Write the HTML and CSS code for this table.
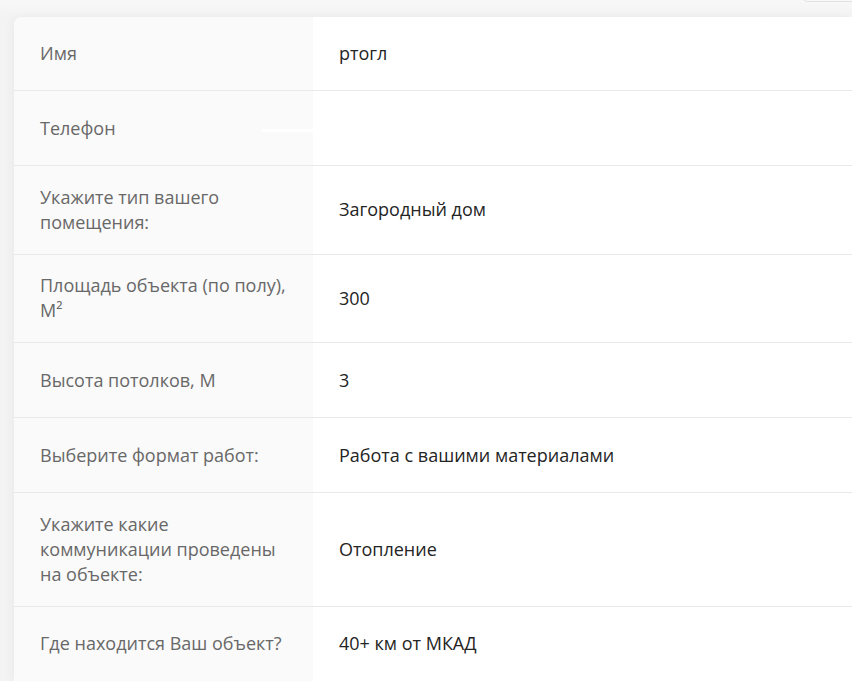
FILE: index.html
```html
<!DOCTYPE html>
<html lang="ru">
<head>
<meta charset="utf-8">
<title>Заявка</title>
<link rel="stylesheet" href="styles.css">
</head>
<body>
<div class="topbar"><div class="tab"></div></div>
<div class="card">
  <div class="row first"><div class="label">Имя</div><div class="value">ртогл</div></div>
  <div class="row"><div class="label">Телефон<span class="redact"></span></div><div class="value"></div></div>
  <div class="row"><div class="label">Укажите тип вашего помещения:</div><div class="value">Загородный дом</div></div>
  <div class="row"><div class="label">Площадь объекта (по полу), М²</div><div class="value">300</div></div>
  <div class="row"><div class="label">Высота потолков, М</div><div class="value">3</div></div>
  <div class="row"><div class="label">Выберите формат работ:</div><div class="value">Работа с вашими материалами</div></div>
  <div class="row"><div class="label">Укажите какие коммуникации проведены на объекте:</div><div class="value">Отопление</div></div>
  <div class="row"><div class="label">Где находится Ваш объект?</div><div class="value">40+ км от МКАД</div></div>
</div>
</body>
</html>
```
FILE: styles.css
```css
html, body {
  margin: 0;
  padding: 0;
  overflow: hidden;
}
body {
  font-family: "Open Sans", "Liberation Sans", sans-serif;
  font-size: 18px;
  line-height: 25px;
  height: 681px;
  background: linear-gradient(#f8f8f8, #f3f3f3 17px, #f3f3f3);
}
.topbar {
  height: 17px;
  position: relative;
}
.tab {
  position: absolute;
  right: -10px;
  top: -10px;
  width: 60px;
  height: 11px;
  border-bottom: 1px solid #e2e2e2;
  border-radius: 0 0 0 6px;
  background: #f8f8f8;
}
.card {
  margin-left: 14px;
  background: #fff;
  border-radius: 8px 0 0 0;
  box-shadow: -2px 0 10px rgba(0,0,0,0.04);
  overflow: hidden;
}
.row {
  display: grid;
  grid-template-columns: 299px 1fr;
  border-bottom: 1px solid #e9e9e9;
  min-height: 74px;
}
.row.first {
  min-height: 73px;
}
.label {
  position: relative;
  background: #fafafa;
  color: #686868;
  padding: 18.75px 22px 18.75px 26px;
  display: flex;
  align-items: center;
}
.value {
  color: #242424;
  padding: 18.75px 26px;
  display: flex;
  align-items: center;
}
.redact {
  position: absolute;
  left: 248px;
  top: 38px;
  width: 52px;
  height: 3px;
  background: #ffffff;
  border-radius: 2px;
}
```
